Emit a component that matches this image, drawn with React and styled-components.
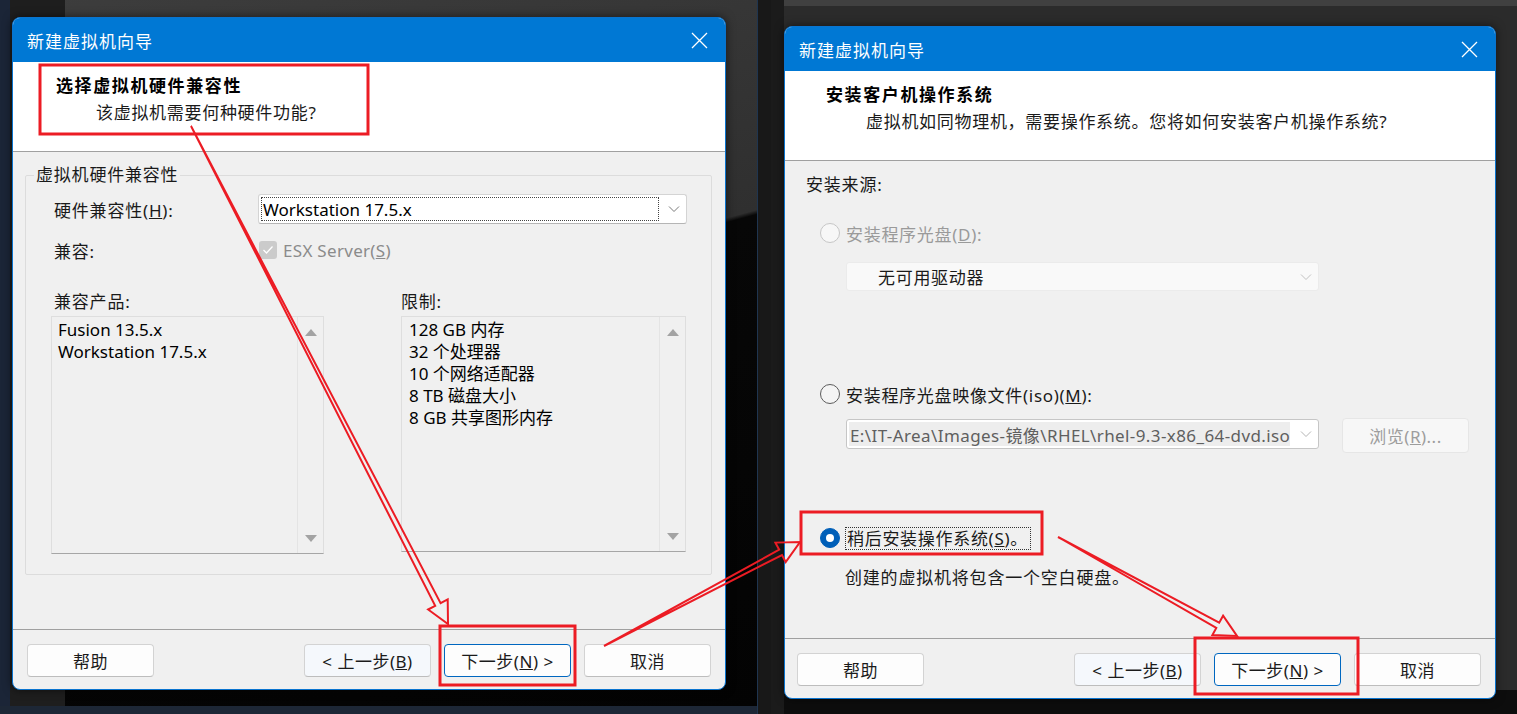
import React from 'react';
import styled, { createGlobalStyle } from 'styled-components';

const GlobalStyle = createGlobalStyle`
    html, body {
        margin: 0;
        padding: 0;
        background: #141414;
        overflow: hidden;
    }
    * {
        box-sizing: border-box;
    }
`;

const FONT = `"Noto Sans", "Noto Sans CJK SC", sans-serif`;

const Page = styled.div`
    position: relative;
    display: flex;
    width: 1517px;
    height: 714px;
    overflow: hidden;
    background: #181818;
    font-family: ${FONT};
    font-size: 17px;
    color: #111;
`;

const LeftShot = styled.div`
    flex: none;
    width: 758px;
    height: 714px;
    padding: 17px 0 0 12px;
    border-right: 1px solid #1f3550;
    background:
        linear-gradient(to bottom, transparent 0 706px, #1d2736 706px),
        linear-gradient(to right, #1b2537 0 10px, #1e1e1e 10px 65px, transparent 65px),
        linear-gradient(165deg, #3d3d3d 0%, #2f2f2f 45%, #070707 45.5%, #030303 100%);
`;

const RightShot = styled.div`
    flex: 1;
    height: 714px;
    margin-left: 13px;
    padding: 26px 0 0 13px;
    background:
        linear-gradient(to right, #1b1b1b 0 13px, transparent 13px),
        linear-gradient(to bottom, #404040 0 6px, #2b2b2b 6px 690px, #0d0d0d 690px);
`;

const Dialog = styled.section`
    width: ${(p) => p.$width}px;
    height: 673px;
    border: 1px solid #0a74cf;
    border-radius: 8px;
    overflow: hidden;
    display: flex;
    flex-direction: column;
    background: #f0f0f0;
    box-shadow: 0 0 10px rgba(0, 0, 0, 0.55);
`;

const TitleBar = styled.div`
    flex: none;
    height: 44px;
    display: flex;
    align-items: center;
    justify-content: space-between;
    padding: 0 17px 0 14px;
    background: #0078d4;
    color: #fff;
    letter-spacing: 1px;
`;

const Banner = styled.div`
    flex: none;
    height: 90px;
    padding: 13px 0 0 ${(p) => p.$indent}px;
    background: #fff;
    border-bottom: 1px solid #a0a0a0;
`;

const BannerTitle = styled.div`
    font-weight: 700;
    line-height: 22px;
    letter-spacing: 1.6px;
    color: #000;
`;

const BannerText = styled.div`
    margin: 5px 0 0 40px;
    line-height: 22px;
    letter-spacing: 0.7px;
    color: #1a1a1a;
`;

const Body = styled.div`
    flex: 1;
    padding: ${(p) => p.$pad};
`;

const Footer = styled.div`
    flex: none;
    height: 60px;
    display: flex;
    align-items: flex-start;
    gap: 13px;
    padding: 14px 14px 0 ${(p) => p.$left}px;
    border-top: 1px solid #a0a0a0;
`;

const Button = styled.button`
    width: 127px;
    height: 33px;
    font-family: ${FONT};
    font-size: 17px;
    color: #1b1b1b;
    letter-spacing: 0.5px;
    background: ${(p) => (p.$soft ? '#f5f8fc' : '#fdfdfd')};
    border: 1px solid ${(p) => (p.$primary ? '#0067c0' : '#d3d3d3')};
    border-bottom-color: ${(p) => (p.$primary ? '#0067c0' : '#bdbdbd')};
    border-radius: 4px;
    padding: 0;
    &:first-child {
        margin-right: auto;
    }
`;

const GroupBox = styled.fieldset`
    margin: 0;
    padding: 0;
    height: 411px;
    border: 1px solid #dcdcdc;
    border-radius: 2px;
`;

const Legend = styled.legend`
    margin-left: 8px;
    padding: 0 2px;
    line-height: 22px;
    letter-spacing: 0.8px;
    color: #1a1a1a;
`;

const GroupInner = styled.div`
    padding: 8px 0 0 25px;
`;

const FormRow = styled.div`
    display: flex;
    align-items: center;
    height: ${(p) => p.$h}px;
    margin-top: ${(p) => p.$top || 0}px;
`;

const FieldLabel = styled.span`
    flex: none;
    width: 207px;
    padding-left: 3px;
    letter-spacing: 0.8px;
    color: #1a1a1a;
`;

const Select = styled.div`
    position: relative;
    width: 429px;
    height: 30px;
    display: flex;
    align-items: center;
    padding: 3px 28px 3px 3px;
    background: #fff;
    border: 1px solid #d4d4d4;
    border-bottom-color: #b5b5b5;
    border-radius: 3px;
`;

const FocusText = styled.div`
    flex: 1;
    height: 100%;
    display: flex;
    align-items: center;
    padding-left: 1px;
    outline: 1px dotted #444;
    color: #000;
`;

const Chevron = styled.svg`
    position: absolute;
    right: 6px;
    top: 50%;
    margin-top: -5px;
    width: 12px;
    height: 10px;
`;

const CheckBox = styled.span`
    width: 18px;
    height: 18px;
    margin-left: 1px;
    border-radius: 3px;
    background: #cbcbcb;
    display: grid;
    place-items: center;
`;

const MutedText = styled.span`
    margin-left: 6px;
    color: #8b8b8b;
    letter-spacing: 0.3px;
`;

const ListsGrid = styled.div`
    display: grid;
    grid-template-columns: 273px 285px;
    column-gap: 77px;
    margin-top: 31px;
`;

const ListTitle = styled.div`
    line-height: 22px;
    padding-left: ${(p) => p.$pad}px;
    letter-spacing: 0.8px;
    color: #1a1a1a;
`;

const ListBox = styled.div`
    margin-top: 3px;
    height: ${(p) => p.$h}px;
    display: grid;
    grid-template-columns: 1fr 26px;
    border: 1px solid #dedede;
    border-bottom-color: #a6a6a6;
    background: #f0f0f0;
`;

const ListItems = styled.div`
    padding: 2px 0 0 ${(p) => p.$pad}px;
    line-height: 22px;
    color: #000;
`;

const ScrollCol = styled.div`
    display: flex;
    flex-direction: column;
    justify-content: space-between;
    align-items: center;
    padding: 12px 0 11px;
    border-left: 1px solid #e4e4e4;
`;

const Tri = styled.span`
    width: 0;
    height: 0;
    border-left: 6px solid transparent;
    border-right: 6px solid transparent;
    ${(p) => (p.$down ? 'border-top: 7px solid #a3a3a3;' : 'border-bottom: 7px solid #a3a3a3;')}
`;

const SectionLabel = styled.div`
    line-height: 22px;
    letter-spacing: 0.8px;
    color: #1a1a1a;
`;

const RadioRow = styled.div`
    display: flex;
    align-items: center;
    gap: 6px;
    height: 22px;
    margin-top: ${(p) => p.$top}px;
    padding-left: 14px;
    color: ${(p) => (p.$disabled ? '#9a9a9a' : '#1a1a1a')};
    letter-spacing: 0.7px;
`;

const Radio = styled.span`
    flex: none;
    width: 20px;
    height: 20px;
    border-radius: 50%;
    display: grid;
    place-items: center;
    background: ${(p) => (p.$checked ? '#005fb8' : p.$disabled ? '#f7f7f7' : '#f4f4f4')};
    border: 1px solid ${(p) => (p.$checked ? '#005fb8' : p.$disabled ? '#c6c6c6' : '#5c5c5c')};
    &::after {
        content: '';
        width: 8px;
        height: 8px;
        border-radius: 50%;
        background: ${(p) => (p.$checked ? '#fff' : 'transparent')};
    }
`;

const FocusLabel = styled.span`
    padding: 0 2px 0 1px;
    line-height: 21px;
    outline: 1px dotted #333;
`;

const DriveSelect = styled.div`
    position: relative;
    width: 473px;
    height: 29px;
    margin: 18px 0 0 40px;
    display: flex;
    align-items: center;
    padding-left: 31px;
    background: #f9f9f9;
    border: 1px solid #ebebeb;
    border-radius: 3px;
    color: #1a1a1a;
    letter-spacing: 0.7px;
`;

const IsoRow = styled.div`
    display: flex;
    align-items: flex-start;
    gap: 23px;
    height: 35px;
    margin: 13px 0 0 40px;
`;

const IsoCombo = styled.div`
    position: relative;
    width: 473px;
    height: 30px;
    margin-top: 1px;
    padding: 2px 28px 2px 2px;
    display: flex;
    background: #fff;
    border: 1px solid #c6c6c6;
    border-radius: 3px;
`;

const IsoText = styled.div`
    flex: 1;
    display: flex;
    align-items: center;
    padding-left: 1px;
    background: #ededed;
    color: #5f5f5f;
    letter-spacing: 0.4px;
    white-space: nowrap;
    overflow: hidden;
`;

const BrowseButton = styled.div`
    width: 127px;
    height: 35px;
    display: grid;
    place-items: center;
    background: #f7f7f7;
    border: 1px solid #e6e6e6;
    border-radius: 4px;
    color: #9d9d9d;
    letter-spacing: 0.5px;
`;

const Note = styled.div`
    margin: 18px 0 0 39px;
    line-height: 22px;
    letter-spacing: 0.8px;
    color: #1a1a1a;
`;

const Overlay = styled.svg`
    position: absolute;
    left: 0;
    top: 0;
    width: 1517px;
    height: 714px;
    pointer-events: none;
`;

function CloseIcon() {
    return (
        <svg width="17" height="17" viewBox="0 0 17 17">
            <path d="M1 1 L16 16 M16 1 L1 16" stroke="#fff" strokeWidth="1.3" fill="none" />
        </svg>
    );
}

function DownChevron({ color = '#7a7a7a' }) {
    return (
        <Chevron viewBox="0 0 12 10">
            <path d="M1 2.5 L6 7.5 L11 2.5" stroke={color} strokeWidth="1" fill="none" />
        </Chevron>
    );
}

// hollow annotation arrow: tapered tail, double-line shaft, open head
function arrowPoints([sx, sy], [ex, ey], shaft = 6, head = 22, headLen = 22) {
    const dx = ex - sx;
    const dy = ey - sy;
    const len = Math.hypot(dx, dy);
    const ux = dx / len;
    const uy = dy / len;
    const nx = -uy;
    const ny = ux;
    const bx = ex - ux * headLen;
    const by = ey - uy * headLen;
    const pts = [
        [sx, sy],
        [bx + (nx * shaft) / 2, by + (ny * shaft) / 2],
        [bx + (nx * head) / 2, by + (ny * head) / 2],
        [ex, ey],
        [bx - (nx * head) / 2, by - (ny * head) / 2],
        [bx - (nx * shaft) / 2, by - (ny * shaft) / 2],
    ];
    return pts.map((p) => p.map((v) => v.toFixed(1)).join(',')).join(' ');
}

const RED = '#ec1c24';

const marks = [
    { x: 40, y: 65, w: 328, h: 69 },
    { x: 440, y: 626, w: 135, h: 59 },
    { x: 801, y: 512, w: 241, h: 42 },
    { x: 1195, y: 638, w: 163, h: 56 },
];

const arrows = [
    [[191, 126], [448, 624]],
    [[604, 646], [800, 542]],
    [[1058, 537], [1237, 636]],
];

function Annotations() {
    return (
        <Overlay viewBox="0 0 1517 714">
            {marks.map((m, i) => (
                <rect key={i} x={m.x} y={m.y} width={m.w} height={m.h} fill="none" stroke={RED} strokeWidth="3" />
            ))}
            {arrows.map(([s, e], i) => (
                <polygon key={i} points={arrowPoints(s, e)} fill="none" stroke={RED} strokeWidth="2" strokeLinejoin="miter" />
            ))}
        </Overlay>
    );
}

function WizardFooter({ left }) {
    return (
        <Footer $left={left}>
            <Button>帮助</Button>
            <Button $soft>&lt; 上一步(<u>B</u>)</Button>
            <Button $primary>下一步(<u>N</u>) &gt;</Button>
            <Button>取消</Button>
        </Footer>
    );
}

function CompatibilityDialog() {
    return (
        <Dialog $width={714}>
            <TitleBar>
                <span>新建虚拟机向导</span>
                <CloseIcon />
            </TitleBar>
            <Banner $indent={43}>
                <BannerTitle>选择虚拟机硬件兼容性</BannerTitle>
                <BannerText>该虚拟机需要何种硬件功能?</BannerText>
            </Banner>
            <Body $pad="12px 13px 0 12px">
                <GroupBox>
                    <Legend>虚拟机硬件兼容性</Legend>
                    <GroupInner>
                        <FormRow $h={30}>
                            <FieldLabel>
                                硬件兼容性(<u>H</u>):
                            </FieldLabel>
                            <Select>
                                <FocusText>Workstation 17.5.x</FocusText>
                                <DownChevron />
                            </Select>
                        </FormRow>
                        <FormRow $h={20} $top={16}>
                            <FieldLabel>兼容:</FieldLabel>
                            <CheckBox>
                                <svg width="12" height="10" viewBox="0 0 12 10">
                                    <path d="M1.5 5 L4.5 8 L10.5 1.5" stroke="#fff" strokeWidth="1.3" fill="none" />
                                </svg>
                            </CheckBox>
                            <MutedText>
                                ESX Server(<u>S</u>)
                            </MutedText>
                        </FormRow>
                        <ListsGrid>
                            <ListTitle $pad={3}>兼容产品:</ListTitle>
                            <ListTitle $pad={0}>限制:</ListTitle>
                            <ListBox $h={238}>
                                <ListItems $pad={6}>
                                    <div>Fusion 13.5.x</div>
                                    <div>Workstation 17.5.x</div>
                                </ListItems>
                                <ScrollCol>
                                    <Tri />
                                    <Tri $down />
                                </ScrollCol>
                            </ListBox>
                            <ListBox $h={236}>
                                <ListItems $pad={7}>
                                    <div>128 GB 内存</div>
                                    <div>32 个处理器</div>
                                    <div>10 个网络适配器</div>
                                    <div>8 TB 磁盘大小</div>
                                    <div>8 GB 共享图形内存</div>
                                </ListItems>
                                <ScrollCol>
                                    <Tri />
                                    <Tri $down />
                                </ScrollCol>
                            </ListBox>
                        </ListsGrid>
                    </GroupInner>
                </GroupBox>
            </Body>
            <WizardFooter left={14} />
        </Dialog>
    );
}

function GuestOsDialog() {
    return (
        <Dialog $width={712}>
            <TitleBar>
                <span>新建虚拟机向导</span>
                <CloseIcon />
            </TitleBar>
            <Banner $indent={41}>
                <BannerTitle>安装客户机操作系统</BannerTitle>
                <BannerText>虚拟机如同物理机，需要操作系统。您将如何安装客户机操作系统?</BannerText>
            </Banner>
            <Body $pad="13px 0 0 21px">
                <SectionLabel>安装来源:</SectionLabel>
                <RadioRow $top={26} $disabled>
                    <Radio $disabled />
                    <span>
                        安装程序光盘(<u>D</u>):
                    </span>
                </RadioRow>
                <DriveSelect>
                    无可用驱动器
                    <DownChevron color="#c2c2c2" />
                </DriveSelect>
                <RadioRow $top={92}>
                    <Radio />
                    <span>
                        安装程序光盘映像文件(iso)(<u>M</u>):
                    </span>
                </RadioRow>
                <IsoRow>
                    <IsoCombo>
                        <IsoText>E:\IT-Area\Images-镜像\RHEL\rhel-9.3-x86_64-dvd.iso</IsoText>
                        <DownChevron color="#b5b5b5" />
                    </IsoCombo>
                    <BrowseButton>
                        <span>
                            浏览(<u>R</u>)...
                        </span>
                    </BrowseButton>
                </IsoRow>
                <RadioRow $top={74}>
                    <Radio $checked />
                    <FocusLabel>
                        稍后安装操作系统(<u>S</u>)。
                    </FocusLabel>
                </RadioRow>
                <Note>创建的虚拟机将包含一个空白硬盘。</Note>
            </Body>
            <WizardFooter left={12} />
        </Dialog>
    );
}

function App() {
    return (
        <>
            <GlobalStyle />
            <Page>
                <LeftShot>
                    <CompatibilityDialog />
                </LeftShot>
                <RightShot>
                    <GuestOsDialog />
                </RightShot>
                <Annotations />
            </Page>
        </>
    );
}

export default App;
